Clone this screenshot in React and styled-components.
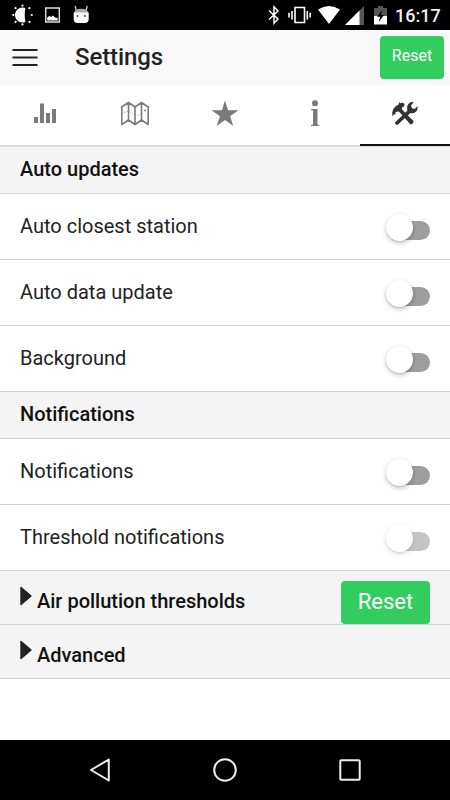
import React, { useState } from "react";
import styled, { createGlobalStyle } from "styled-components";

const GlobalStyle = createGlobalStyle`
  * {
    box-sizing: border-box;
  }
  body {
    margin: 0;
    padding: 0;
    background-color: #ffffff;
  }
`;

const Screen = styled.div`
  display: flex;
  flex-direction: column;
  width: 450px;
  height: 800px;
  overflow: hidden;
  background-color: #ffffff;
  color: #222222;
  font-family: Roboto, "Liberation Sans", sans-serif;
`;

const StatusBar = styled.div`
  display: flex;
  flex: none;
  justify-content: space-between;
  height: 30px;
  padding: 0 10px 0 12px;
  background-color: #000000;
`;

const StatusGroup = styled.div`
  display: flex;
  align-items: center;
  gap: ${(props) => props.$gap || 0}px;
  svg {
    display: block;
    flex: none;
  }
`;

const SystemGroup = styled(StatusGroup)`
  svg:nth-of-type(2) {
    margin-left: 8px;
  }
  svg:nth-of-type(3) {
    margin-left: 7px;
  }
  svg:nth-of-type(4) {
    margin-left: 5px;
  }
  svg:nth-of-type(5) {
    margin-left: 10px;
  }
`;

const Clock = styled.span`
  width: 45px;
  margin-left: 8px;
  color: #eeeeee;
  font-size: 18px;
  font-weight: 500;
  line-height: 31px;
  white-space: nowrap;
`;

const Header = styled.header`
  display: flex;
  flex: none;
  height: 55px;
  padding: 6px 6px 0 12px;
  background-color: #f8f8f8;
`;

const MenuButton = styled.button`
  display: block;
  width: 26px;
  height: 43px;
  padding: 0;
  border: none;
  background: none;
  svg {
    display: block;
  }
`;

const Title = styled.h1`
  flex: 1;
  margin: 0 0 0 37px;
  font-size: 24px;
  font-weight: 500;
  line-height: 42px;
  letter-spacing: -0.1px;
`;

const ResetButton = styled.button`
  width: ${(props) => (props.$small ? "64px" : "89px")};
  height: 43px;
  padding: 0 0 ${(props) => (props.$small ? "3px" : "2px")};
  border: none;
  border-radius: 4px;
  background-color: #33cd5f;
  color: #ffffff;
  font-family: inherit;
  font-size: ${(props) => (props.$small ? "16px" : "22px")};
  line-height: ${(props) => (props.$small ? "40px" : "41px")};
`;

const Tabs = styled.nav`
  display: flex;
  flex: none;
  height: 62px;
  border-bottom: 2px solid #dcdcdc;
`;

const Tab = styled.button`
  display: flex;
  justify-content: center;
  width: 90px;
  height: 61px;
  padding: 14px 0 0;
  border: none;
  border-bottom: 2px solid ${(props) => (props.$active ? "#111111" : "transparent")};
  background: none;
  color: ${(props) => (props.$active ? "#333333" : "#7a7a7a")};
`;

const Content = styled.main`
  flex: 1;
`;

const Divider = styled.h2`
  height: 47px;
  margin: 0;
  padding: 0 20px;
  border-bottom: 1px solid #d2d2d2;
  background-color: #f4f4f4;
  color: #111111;
  font-size: 20px;
  font-weight: 500;
  line-height: 45px;
`;

const Row = styled.label`
  display: flex;
  justify-content: space-between;
  height: 66px;
  padding: 0 20px;
  border-bottom: 1px solid #d2d2d2;
  font-size: 20px;
  line-height: 64px;
`;

const Track = styled.span`
  display: flex;
  width: 40px;
  height: 19px;
  margin-top: 27px;
  border-radius: 10px;
  background-color: #9e9e9e;
  opacity: ${(props) => (props.$disabled ? 0.6 : 1)};
`;

const Knob = styled.span`
  flex: none;
  width: 27px;
  height: 27px;
  margin: -7.5px 0 0 -4px;
  border-radius: 50%;
  background-color: #ffffff;
  box-shadow: 0 2px 5px rgba(0, 0, 0, 0.24), 0 1px 1px rgba(0, 0, 0, 0.1);
`;

const Expander = styled.div`
  display: flex;
  height: 54px;
  padding: 0 20px;
  border-bottom: 1px solid #d2d2d2;
  background-color: #f4f4f4;
  svg {
    display: block;
    margin: 14px 5px 0 0;
  }
`;

const ExpanderLabel = styled.span`
  flex: 1;
  color: #111111;
  font-size: 20px;
  font-weight: 500;
  line-height: 60px;
`;

const ExpanderAction = styled.div`
  margin-top: 10px;
`;

const NavBar = styled.footer`
  display: flex;
  flex: none;
  justify-content: space-between;
  align-items: center;
  height: 60px;
  padding: 0 85px;
  background-color: #000000;
`;

const StatusIcons = () => (
  <StatusGroup $gap={9}>
    <svg width="22" height="22" viewBox="0 0 22 22" fill="#fff">
      <path d="M13.4 4.1a7.5 7.5 0 1 0 0 13.8Q12 11 13.4 4.1z" />
      <circle cx="10.5" cy="1.6" r="1.1" />
      <circle cx="10.5" cy="20.4" r="1.1" />
      <circle cx="3.6" cy="4.2" r="1.1" />
      <circle cx="3.6" cy="17.8" r="1.1" />
      <circle cx="1.3" cy="11" r="1.1" />
      <circle cx="17.4" cy="4.2" r="1.1" />
      <circle cx="17.4" cy="17.8" r="1.1" />
      <circle cx="19.8" cy="11" r="1.1" />
    </svg>
    <svg width="19" height="20" viewBox="0 0 19 20">
      <path d="M2.7 3h13.6v14H2.7z" fill="none" stroke="#ddd" strokeWidth="1.4" />
      <path d="M4.2 15.5v-3l2-1.5 2 .9 1.700-1.500 2 2 2.800.6v2.500z" fill="#fff" />
    </svg>
    <svg width="20" height="20" viewBox="-1.200 1 20 20" fill="#fff">
      <path d="M4.300 7.500L3 2M13.700 7.500l1.300-5.500" stroke="#ddd" strokeWidth="1.2" />
      <path d="M2 9q.4-4.200 7-4.200T16 9z" fill="#aaa" />
      <path d="M1.500 8.500h15v6.500q0 4-4 4h-7q-4 0-4-4z" />
      <circle cx="5.3" cy="12" r="0.9" fill="#333" />
      <circle cx="12.7" cy="12" r="0.9" fill="#333" />
    </svg>
  </StatusGroup>
);

const SystemIcons = () => (
  <SystemGroup>
    <svg width="12" height="20" viewBox="0 0 12 20" fill="none" stroke="#fff" strokeWidth="1.5">
      <path d="M1 5.500l9 8.500-4 4.200V1.800L10 6l-9 8.500" />
    </svg>
    <svg width="23" height="20" viewBox="0 0 23 20" fill="none" stroke="#fff" strokeWidth="1.6">
      <path d="M7 2.500h9.500v15H7zM4 6v8.500M1 7.800v4.700M19.300 6v8.500M22.200 7.800v4.700" />
    </svg>
    <svg width="22" height="20" viewBox="0 0 22 20">
      <path d="M0 4.500Q11-2.600 22 4.500L11 19z" fill="#fff" />
    </svg>
    <svg width="19" height="20" viewBox="0 0 19 20">
      <path d="M0 20L19 1v19z" fill="#555" />
      <path d="M0 20L14.500 5.500V20z" fill="#fff" />
    </svg>
    <svg width="13" height="20" viewBox="0 0 13 20">
      <path d="M0 3h4V1h5v2h4v8H0z" fill="#555" />
      <path d="M0 11h13v8.500H0z" fill="#fff" />
      <path d="M8.500 5L3 11.700h3.200L4.700 17 10 10H6.800z" fill="#000" />
    </svg>
    <Clock>16:17</Clock>
  </SystemGroup>
);

const ChartIcon = () => (
  <svg width="24" height="30" viewBox="0 0 24 30" fill="currentColor">
    <path d="M1 18h4v6H1zM7 4.500h4V24H7zM13 14h4v10h-4zM19 10h4v14h-4z" />
  </svg>
);

const MapIcon = () => (
  <svg width="30" height="30" viewBox="0 0 30 30" fill="none" stroke="currentColor">
    <path
      d="M1.800 8L8.500 3.500 15 8l6.500-4.500L28.200 8v17.500l-6.700-4.500L15 25.500 8.500 21l-6.700 4.500zM8.500 3.500V21M15 8v17.500M21.500 3.500V21"
      strokeWidth="1.6"
      strokeLinejoin="round"
    />
    <path d="M4 13.500l4-1.500 5 3 5 1.500 5-3" strokeWidth="0.9" strokeDasharray="1 2" />
    <circle cx="25" cy="11.5" r="0.9" fill="currentColor" stroke="none" />
  </svg>
);

const StarIcon = () => (
  <svg width="28" height="30" viewBox="0 0 28 30" fill="currentColor">
    <path d="M14 1.500l3.100 9.700h10.300l-8.300 6 3.200 9.800-8.300-6-8.300 6 3.200-9.800-8.300-6h10.300z" />
  </svg>
);

const InfoIcon = () => (
  <svg width="12" height="30" viewBox="0 0 12 30" fill="currentColor">
    <circle cx="6" cy="4.3" r="3" />
    <path d="M2 10h6.500v15.400l1.800.5V27H2v-1.100l2-.5V11.600l-2-.5z" />
  </svg>
);

const ToolsIcon = () => (
  <svg width="28" height="30" viewBox="0 0 28 30" fill="currentColor">
    <path d="M1.100 17.700Q.8 13 2.300 10 4 7 7.300 5.800L8.400 3.300l1.300.9 2.400-.7 1.500 2.300-.9 1.900-1.600.5-.1 2.200L22.500 22q.4 1-.9 2.400-1.200 1.300-2.300.9L8.200 12.700l-1.600-.3-2.100.9.100 2-2.300.5z" />
    <path d="M4.100 23.300L14 14l2.400-2.500Q15.200 8 17 5.500q2-3 5.700-2.300L20 6.500l1.200 3 2.900.2 2.300-2.600q.9 3-1 5.200-2.200 2.600-6 1.600L7.300 25.200q-1.100 1-2.400.3-1.400-1-.8-2.200z" />
  </svg>
);

const Arrow = () => (
  <svg width="12" height="22" viewBox="0 0 12 22">
    <path d="M1 2.500v17L11 11z" fill="#222" stroke="#222" strokeWidth="1.4" strokeLinejoin="round" />
  </svg>
);

const tabs = [
  { id: "data", Icon: ChartIcon },
  { id: "map", Icon: MapIcon },
  { id: "favorites", Icon: StarIcon },
  { id: "info", Icon: InfoIcon },
  { id: "settings", Icon: ToolsIcon },
];

const updates = ["Auto closest station", "Auto data update", "Background"];

const Toggle = ({ label, disabled }) => (
  <Row>
    {label}
    <Track $disabled={disabled}>
      <Knob />
    </Track>
  </Row>
);

export default function App() {
  const [tab, setTab] = useState("settings");

  return (
    <Screen>
      <GlobalStyle />
      <StatusBar>
        <StatusIcons />
        <SystemIcons />
      </StatusBar>

      <Header>
        <MenuButton aria-label="Menu">
          <svg width="26" height="43" viewBox="0 0 26 43" stroke="#222" strokeWidth="2">
            <path d="M.5 14h25M.5 21.500h25M.5 29h25" />
          </svg>
        </MenuButton>
        <Title>Settings</Title>
        <ResetButton $small>Reset</ResetButton>
      </Header>

      <Tabs>
        {tabs.map(({ id, Icon }) => (
          <Tab key={id} $active={id === tab} onClick={() => setTab(id)} aria-label={id}>
            <Icon />
          </Tab>
        ))}
      </Tabs>

      <Content>
        <Divider>Auto updates</Divider>
        {updates.map((label) => (
          <Toggle key={label} label={label} />
        ))}

        <Divider>Notifications</Divider>
        <Toggle label="Notifications" />
        <Toggle label="Threshold notifications" disabled />

        <Expander>
          <Arrow />
          <ExpanderLabel>Air pollution thresholds</ExpanderLabel>
          <ExpanderAction>
            <ResetButton>Reset</ResetButton>
          </ExpanderAction>
        </Expander>
        <Expander>
          <Arrow />
          <ExpanderLabel>Advanced</ExpanderLabel>
        </Expander>
      </Content>

      <NavBar>
        <svg width="30" height="30" viewBox="0 0 30 30" fill="none" stroke="#eee" strokeWidth="2">
          <path d="M23.800 4.500v21L6 15z" strokeLinejoin="round" />
        </svg>
        <svg width="30" height="30" viewBox="0 0 30 30" fill="none" stroke="#eee" strokeWidth="2">
          <circle cx="15" cy="15" r="10.8" />
        </svg>
        <svg width="30" height="30" viewBox="0 0 30 30" fill="none" stroke="#eee" strokeWidth="2">
          <rect x="5.3" y="5.3" width="19.4" height="19.4" rx="1" />
        </svg>
      </NavBar>
    </Screen>
  );
}
